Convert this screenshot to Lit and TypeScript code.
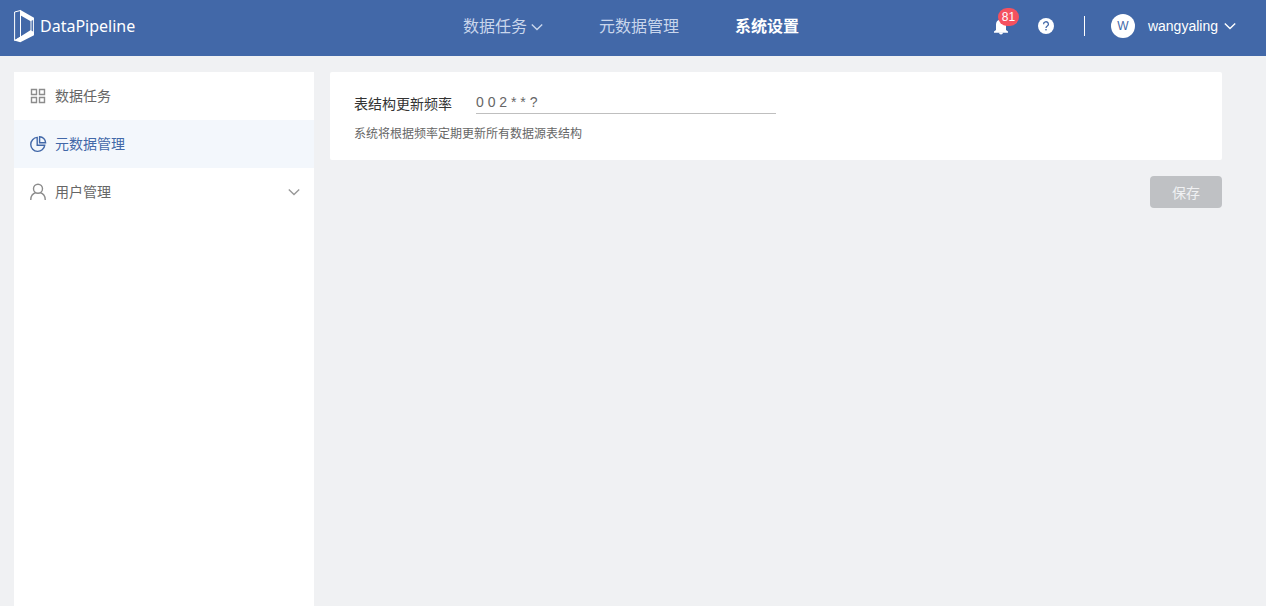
import { LitElement, html, css, svg } from "lit";
import { customElement, property, state } from "lit/decorators.js";
import { classMap } from "lit/directives/class-map.js";

@customElement("chevron-icon")
class ChevronIcon extends LitElement {
  static styles = css`
    :host { display: inline-flex; }
    svg { display: block; }
  `;
  render() {
    return html`<svg width="12" height="12" viewBox="0 0 12 12" fill="none" stroke="currentColor" stroke-width="1.4" aria-hidden="true">
      <path d="M.8 3.4 6 8.6l5.2-5.2" />
    </svg>`;
  }
}

@customElement("top-bar")
class TopBar extends LitElement {
  static styles = css`
    :host { display: block; }
    .bar {
      display: grid;
      grid-template-columns: 1fr auto 1fr;
      align-items: center;
      height: 56px;
      padding: 0 18px 4px 14px;
      box-sizing: border-box;
      background: #4268a8;
      color: #fff;
    }
    a { color: inherit; text-decoration: none; }
    .logo { display: flex; align-items: center; gap: 5px; font: 16px/24px "Noto Sans", sans-serif; justify-self: start; }
    .logo svg { display: block; }
    .nav { display: flex; gap: 56px; padding-top: 2px; font-size: 16px; line-height: 24px; }
    .link { display: flex; align-items: center; gap: 4px; color: #c9d6ec; }
    .link.active { color: #fff; font-weight: 700; }
    .tools { display: flex; align-items: center; justify-self: end; padding-right: 12px; }
    button { border: 0; padding: 0; background: none; color: inherit; font: inherit; cursor: pointer; }
    .bell { position: relative; display: flex; margin-right: 29px; }
    .badge {
      position: absolute;
      left: 5px;
      top: -9px;
      width: 21px;
      height: 18px;
      border-radius: 9px;
      background: #f5515f;
      font-size: 12px;
      line-height: 18px;
      text-align: center;
    }
    .help { display: flex; margin-right: 30px; }
    .divider { width: 1px; height: 20px; background: #fff; margin-right: 26px; }
    .user { display: flex; align-items: center; font-size: 14px; line-height: 20px; }
    .avatar {
      width: 24px;
      height: 24px;
      border-radius: 50%;
      background: #fff;
      color: #4268a8;
      font-size: 12px;
      line-height: 24px;
      text-align: center;
      margin-right: 13px;
    }
    .name { margin-right: 6px; }
  `;
  render() {
    return html`<header class="bar">
      <a class="logo" href="#">
        <svg width="21" height="34" viewBox="0 0 21 34" aria-hidden="true">
          <path d="M6.500 1.500.6 3v28.500l5.900-3.300V2M17 11.500v10M19.400 9v15" fill="none" stroke="#fff" stroke-width="1" />
          <path d="M6 .8 20 8.800v1.600l-3.300 1.900L6.300 6.200ZM.2 31.600 16.800 20.900 20 23.200v3L6.300 33.200Z" fill="#fff" />
        </svg>
        <span>DataPipeline</span>
      </a>
      <nav class="nav">
        <a class="link" href="#tasks">数据任务<chevron-icon></chevron-icon></a>
        <a class="link" href="#metadata">元数据管理</a>
        <a class="link active" href="#settings">系统设置</a>
      </nav>
      <div class="tools">
        <button class="bell" aria-label="81">
          <svg width="16" height="18" viewBox="0 0 16 18" fill="#fff" aria-hidden="true">
            <path d="M8 1a1.300 1.300 0 0 1 1.300 1.400C11.600 3 13 5 13 7.500V13l2 1.500v1.300H1v-1.300L3 13V7.500C3 5 4.400 3 6.700 2.400A1.300 1.300 0 0 1 8 1Z" />
            <path d="M6 15.600h4a2 2 0 0 1-4 0Z" />
          </svg>
          <span class="badge">81</span>
        </button>
        <button class="help" aria-label="?">
          <svg width="16" height="16" viewBox="0 0 16 16" aria-hidden="true">
            <circle cx="8" cy="8" r="8" fill="#fff" />
            <path d="M5.600 6.300a2.400 2.300 0 1 1 3.700 1.700C8.300 8.700 8 8.900 8 10" fill="none" stroke="#4268a8" stroke-width="1.300" />
            <rect x="7.300" y="11" width="1.400" height="1.400" fill="#4268a8" />
          </svg>
        </button>
        <span class="divider"></span>
        <button class="user">
          <span class="avatar">W</span><span class="name">wangyaling</span><chevron-icon></chevron-icon>
        </button>
      </div>
    </header>`;
  }
}

const icons = {
  grid: svg`<path d="M1.500 1.500h5v5h-5Z M9.500 1.500h5v5h-5Z M1.500 9.500h5v5h-5Z M9.500 9.500h5v5h-5Z" />`,
  pie: svg`<path d="M7.200 1.400a7 7 0 1 0 7.500 7.900H7.200Z M9.600.7v6h6A6.200 6.200 0 0 0 9.600.7Z" />`,
  user: svg`<circle cx="8" cy="4.800" r="4.500" /><path d="M.8 16v-.8C1 12.200 3 9.600 5.700 8.700M15.200 16v-.8c-.2-3-2.200-5.600-4.900-6.500" />`,
};

@customElement("side-menu")
class SideMenu extends LitElement {
  static items = [
    { label: "数据任务", icon: "grid", href: "#tasks", expandable: false },
    { label: "元数据管理", icon: "pie", href: "#metadata", expandable: false },
    { label: "用户管理", icon: "user", href: "#users", expandable: true },
  ];
  @property() active = "#metadata";
  static styles = css`
    :host { display: block; background: #fff; }
    .item {
      display: flex;
      align-items: center;
      gap: 9px;
      height: 48px;
      padding: 0 14px 0 16px;
      box-sizing: border-box;
      color: #666;
      font-size: 14px;
      line-height: 20px;
      text-decoration: none;
    }
    .item.active { background: #f3f7fc; color: #4268a8; }
    .icon { display: block; color: #8c8c8c; overflow: visible; }
    .active .icon { color: inherit; }
    .label { flex: 1; }
    .arrow { color: #999; }
  `;
  render() {
    return html`<nav>
      ${SideMenu.items.map(
        (item) => html`<a class=${classMap({ item: true, active: item.href === this.active })} href=${item.href}>
          <svg class="icon" width="16" height="16" viewBox="0 0 16 16" fill="none" stroke="currentColor" stroke-width="1.400" aria-hidden="true">
            ${icons[item.icon]}
          </svg>
          <span class="label">${item.label}</span>
          ${item.expandable ? html`<chevron-icon class="arrow"></chevron-icon>` : ""}
        </a>`
      )}
    </nav>`;
  }
}

@customElement("schedule-form")
class ScheduleForm extends LitElement {
  @state() private value = "0 0 2 * * ?";
  static styles = css`
    :host { display: block; }
    .form { display: flex; flex-direction: column; gap: 16px; }
    .card { background: #fff; border-radius: 2px; padding: 20px 24px 16px; }
    .row { display: flex; align-items: flex-start; gap: 24px; }
    .label { color: #333; font-size: 14px; line-height: 24px; }
    .input {
      flex: 0 1 300px;
      min-width: 0;
      height: 22px;
      box-sizing: border-box;
      padding: 0 0 1px;
      border: 0;
      border-bottom: 1px solid #bfbfbf;
      border-radius: 0;
      outline: 0;
      background: none;
      color: #666;
      font-family: inherit;
      font-size: 14px;
    }
    .hint { margin: 8px 0 0; color: #666; font-size: 12px; line-height: 20px; }
    .save {
      align-self: flex-end;
      width: 72px;
      height: 32px;
      padding: 0;
      border: 0;
      border-radius: 4px;
      background: #bfc1c4;
      color: #f0f1f3;
      font-family: inherit;
      font-size: 14px;
    }
  `;
  render() {
    return html`<form class="form" @submit=${(e: Event) => e.preventDefault()}>
      <div class="card">
        <div class="row">
          <label class="label" for="cron">表结构更新频率</label>
          <input class="input" id="cron" type="text" .value=${this.value}
            @input=${(e: Event) => (this.value = (e.target as HTMLInputElement).value)} />
        </div>
        <p class="hint">系统将根据频率定期更新所有数据源表结构</p>
      </div>
      <button class="save" type="submit" disabled>保存</button>
    </form>`;
  }
}

@customElement("app-root")
class AppRoot extends LitElement {
  static styles = css`
    :host {
      display: flex;
      flex-direction: column;
      min-height: 100vh;
      background: #f0f1f3;
      font-family: "Liberation Sans", "Noto Sans CJK SC", sans-serif;
    }
    .body { flex: 1; display: flex; gap: 16px; padding: 16px 44px 0 14px; }
    .side { flex: 0 0 300px; }
    .content { flex: 1; min-width: 0; }
  `;
  render() {
    return html`<top-bar></top-bar>
      <div class="body">
        <side-menu class="side"></side-menu>
        <main class="content"><schedule-form></schedule-form></main>
      </div>`;
  }
}
